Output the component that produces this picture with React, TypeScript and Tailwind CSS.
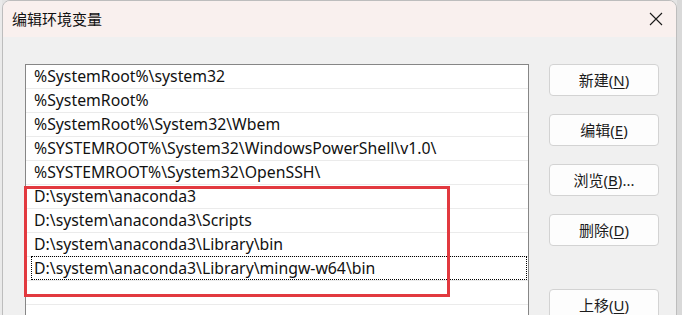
import React from "react";

const rows = [
  "%SystemRoot%\\system32",
  "%SystemRoot%",
  "%SystemRoot%\\System32\\Wbem",
  "%SYSTEMROOT%\\System32\\WindowsPowerShell\\v1.0\\",
  "%SYSTEMROOT%\\System32\\OpenSSH\\",
  "D:\\system\\anaconda3",
  "D:\\system\\anaconda3\\Scripts",
  "D:\\system\\anaconda3\\Library\\bin",
  "D:\\system\\anaconda3\\Library\\mingw-w64\\bin",
  "",
  "",
];

function Btn({ pre, k, post, className = "" }: { pre: string; k: string; post: string; className?: string }) {
  return (
    <div
      className={
        "h-[32px] w-[110px] rounded-[4px] border border-[#d3d3d3] bg-[#fdfdfd] flex items-center justify-center text-[15px] text-[#1b1b1b] " +
        className
      }
    >
      <span>
        {pre}(<span className="underline underline-offset-2">{k}</span>){post}
      </span>
    </div>
  );
}

export default function App() {
  return (
    <div
      className="relative w-[682px] h-[315px] overflow-hidden bg-[#e4e4e4] flex"
      style={{ fontFamily: '"Noto Sans", "Noto Sans CJK SC", sans-serif' }}
    >
      <div className="w-[2px] shrink-0 bg-[#eaeaea]" />
      <div className="w-[675px] shrink-0 h-[400px] rounded-t-[8px] border border-[#bdbdbd] overflow-hidden flex flex-col bg-[#f0f0f0]">
        <div className="h-[36px] shrink-0 bg-[#f9f0ee] flex items-center justify-between pl-[9px] pr-[12px]">
          <span className="text-[15px] text-[#111]">编辑环境变量</span>
          <svg width="14" height="14" viewBox="0 0 14 14" className="mr-[1px]">
            <path d="M1 1 L13 13 M13 1 L1 13" stroke="#1a1a1a" strokeWidth="1.1" />
          </svg>
        </div>
        <div className="flex pl-[22px] pt-[27px]">
          <div className="w-[504px] h-[300px] border border-[#868686] bg-white">
            {rows.map((r, i) => (
              <div key={i} className="h-[24px] border-b border-[#ebebeb] flex text-[15.8px] text-[#111]">
                {i === 8 ? (
                  <div className="ml-[5px] mr-[1px] mt-[-1px] h-[24px] flex-1 border border-dotted border-black pl-[2px] leading-[22px] whitespace-nowrap">
                    {r}
                  </div>
                ) : (
                  <div className="pl-[8px] leading-[23px] whitespace-nowrap">{r}</div>
                )}
              </div>
            ))}
          </div>
          <div className="ml-[20px] flex flex-col">
            <Btn pre="新建" k="N" post="" />
            <Btn pre="编辑" k="E" post="" className="mt-[18px]" />
            <Btn pre="浏览" k="B" post="..." className="mt-[18px]" />
            <Btn pre="删除" k="D" post="" className="mt-[18px]" />
            <Btn pre="上移" k="U" post="" className="mt-[43px]" />
          </div>
        </div>
      </div>
      <div className="flex-1 bg-[#d9d9d9]" />
      <div className="absolute left-[24px] top-[186px] w-[426px] h-[111px] border-[3px] border-[#e2393f]" />
    </div>
  );
}
